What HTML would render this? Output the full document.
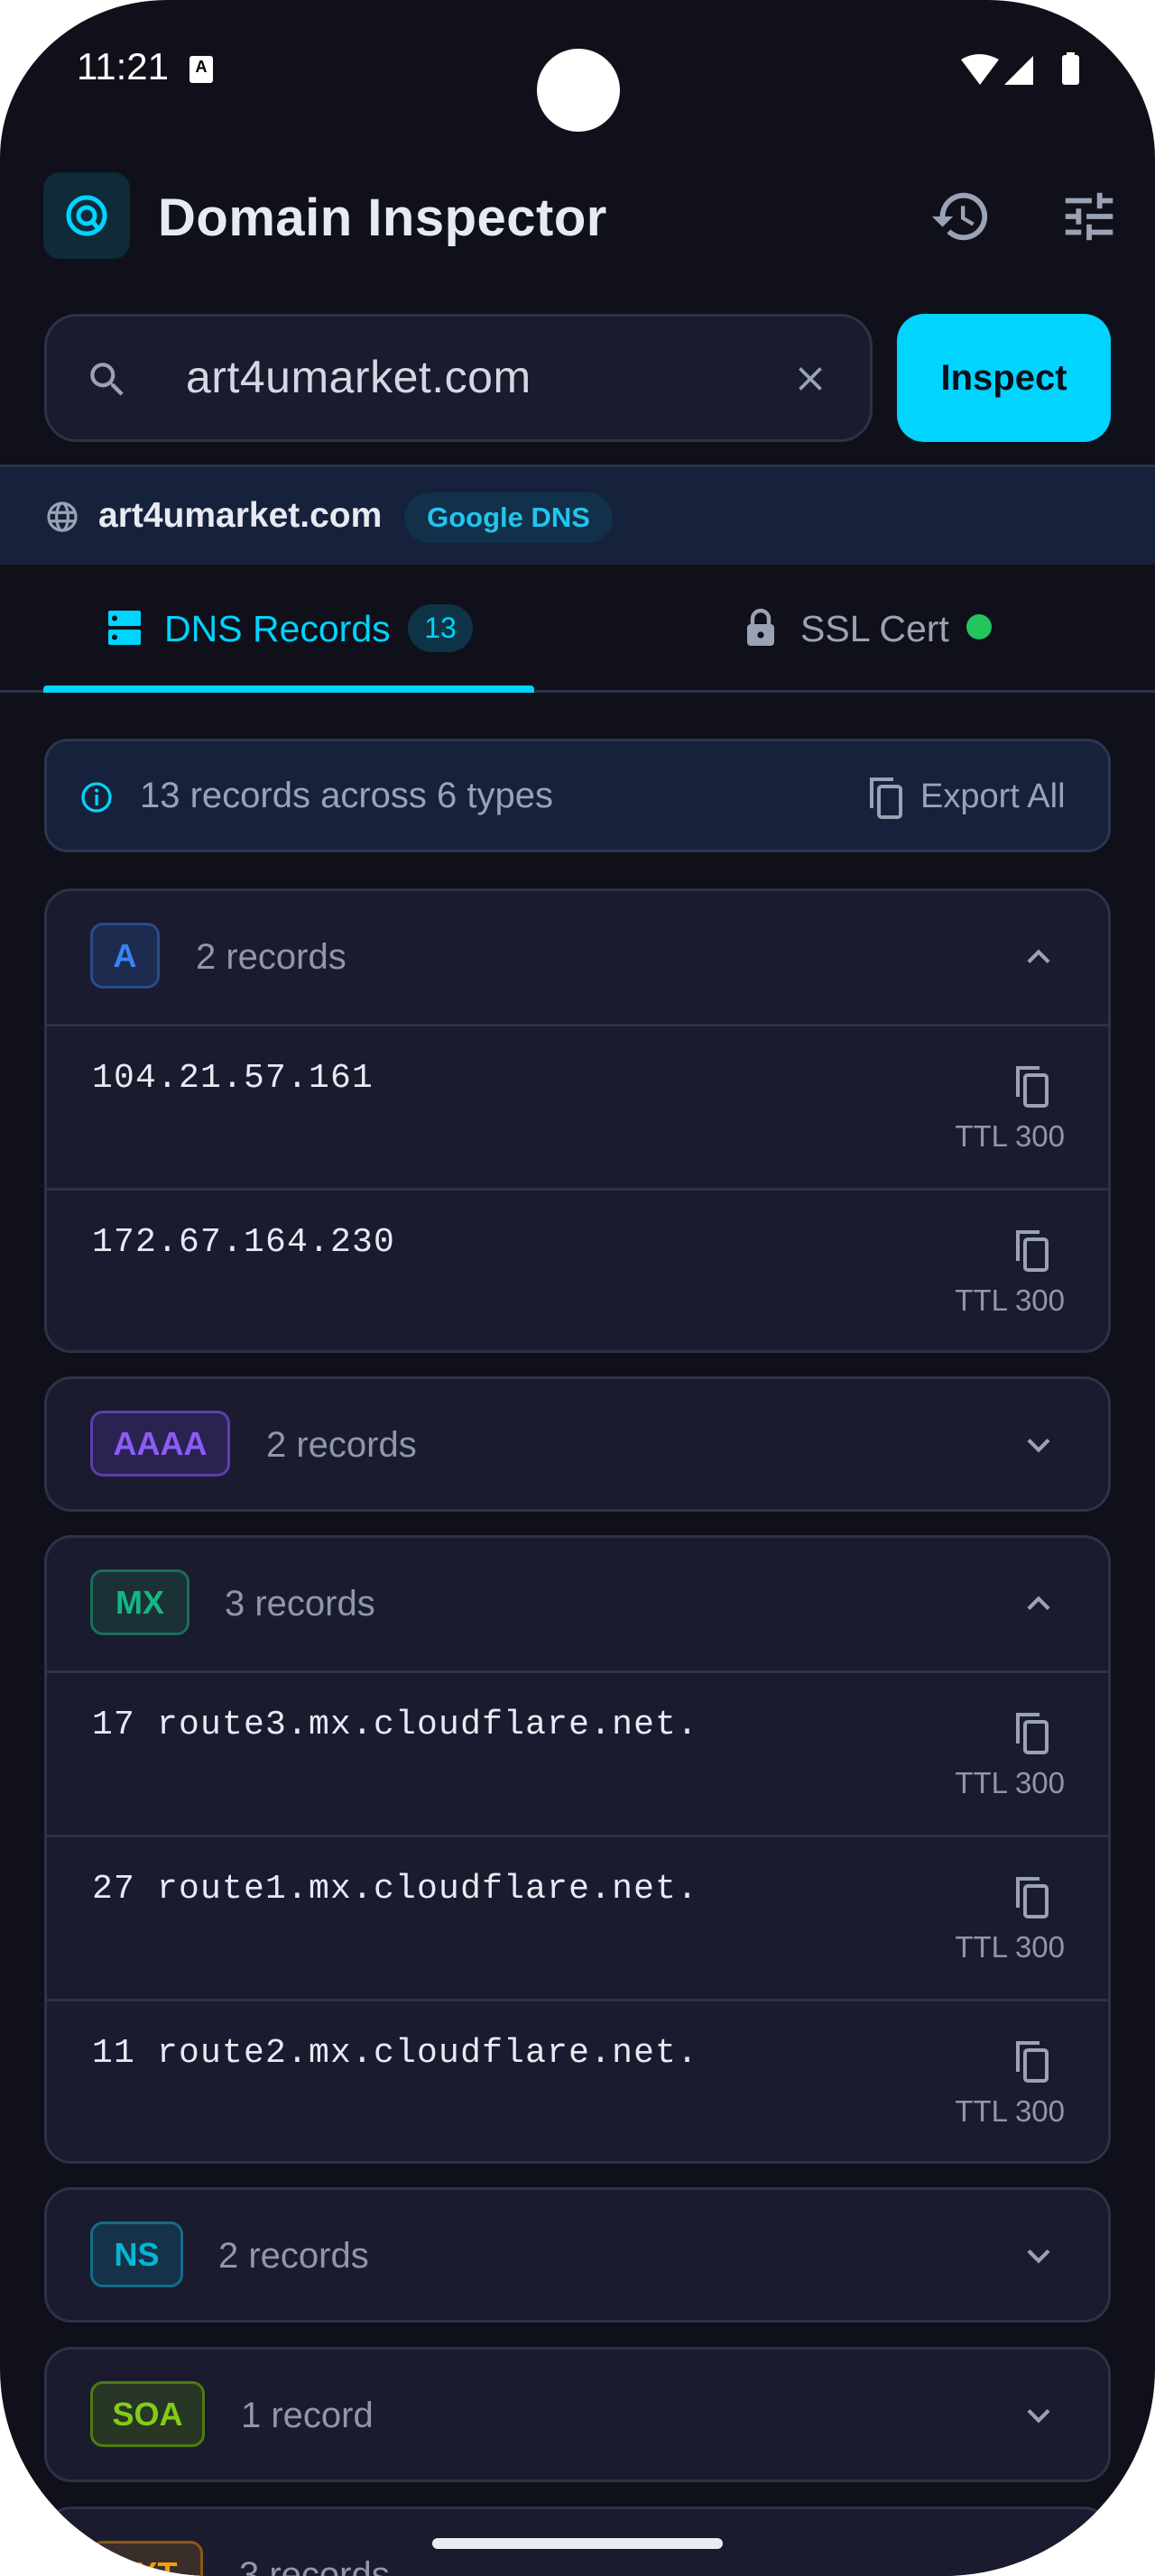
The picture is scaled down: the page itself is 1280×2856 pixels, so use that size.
<!DOCTYPE html>
<html><head><meta charset="utf-8"><style>
*{margin:0;padding:0;box-sizing:border-box}
body{width:1280px;height:2856px;background:#fff;overflow:hidden;font-family:"Liberation Sans",sans-serif;position:relative}
.phone{position:absolute;left:0;top:0;width:1280px;height:2856px;background:#0f101a;border-radius:185px 185px 235px 235px/175px 175px 230px 230px;overflow:hidden}
.a{position:absolute}
.card{position:absolute;left:49px;width:1182px;background:#1a1b2e;border:3px solid #2c3346;border-radius:30px;overflow:hidden}
.hdr{position:relative;height:147px}
.badge{position:absolute;left:48px;top:35px;height:73px;border:3px solid;border-radius:14px;font-weight:bold;font-size:36px;line-height:67px;text-align:center}
.cnt{position:absolute;top:0;line-height:147px;font-size:40px;color:#8f97ab}
.chev{position:absolute;right:58px;top:54px}
.row{position:relative;height:182px;border-top:3px solid #2c3346}
.mono{position:absolute;left:50px;top:36px;font-family:"Liberation Mono",monospace;font-size:38px;letter-spacing:1.2px;color:#e8eaf2}
.cp{position:absolute;right:62px;top:42px}
.ttl{position:absolute;right:48px;top:103px;font-size:33px;color:#8f97ab}
</style></head><body>
<div class="phone">
<div class="a" style="left:85px;top:50px;font-size:42px;color:#fff">11:21</div>
<div class="a" style="left:210px;top:62px;width:26px;height:30px;background:#fff;border-radius:3px;color:#000;font-size:18px;font-weight:bold;text-align:center;line-height:24px">A</div>
<div class="a" style="left:595px;top:54px;width:92px;height:92px;border-radius:50%;background:#fff"></div>
<svg class="a" style="left:1065px;top:58px" width="140" height="40" viewBox="0 0 140 40"><path d="M0 8 Q20 -4 42 8 L21 36Z" fill="#fff"/><path d="M48 36 L80 4 L80 36Z" fill="#fff"/><rect x="112" y="3" width="19" height="33" rx="3" fill="#fff"/><rect x="117" y="0" width="9" height="5" fill="#fff"/></svg>
<div class="a" style="left:48px;top:191px;width:96px;height:96px;border-radius:18px;background:#0f2a38"></div>
<svg class="a" style="left:66px;top:209px" width="60" height="60" viewBox="0 0 60 60"><circle cx="30" cy="30" r="20" fill="none" stroke="#00d4ff" stroke-width="5"/><circle cx="30" cy="30" r="9" fill="none" stroke="#00d4ff" stroke-width="5"/><path d="M36 36 L44 46" stroke="#00d4ff" stroke-width="5"/></svg>
<div class="a" style="left:175px;top:208px;font-size:58px;font-weight:bold;color:#e8eaf2;letter-spacing:0.5px">Domain Inspector</div>
<svg class="a" style="left:1030px;top:205px" width="70" height="70" viewBox="0 0 24 24"><path fill="#9aa3b5" d="M13 3a9 9 0 0 0-9 9H1l3.890 3.89.07.14L9 12H6c0-3.870 3.130-7 7-7s7 3.130 7 7-3.130 7-7 7c-1.930 0-3.680-.79-4.940-2.060l-1.420 1.420A8.954 8.954 0 0 0 13 21a9 9 0 0 0 0-18zm-1 5v5l4.280 2.540.72-1.210-3.5-2.080V8H12z"/></svg>
<svg class="a" style="left:1172px;top:205px" width="70" height="70" viewBox="0 0 24 24"><path fill="#9aa3b5" d="M3 17v2h6v-2H3zM3 5v2h10V5H3zm10 16v-2h8v-2h-8v-2h-2v6h2zM7 9v2H3v2h4v2h2V9H7zm14 4v-2H11v2h10zm-6-4h2V7h4V5h-4V3h-2v6z"/></svg>
<div class="a" style="left:49px;top:348px;width:918px;height:142px;background:#1a1b2e;border:3px solid #2c3346;border-radius:36px"></div>
<svg class="a" style="left:94px;top:396px" width="50" height="50" viewBox="0 0 24 24"><path fill="#9aa3b5" d="M15.5 14h-.79l-.28-.27A6.471 6.471 0 0 0 16 9.5 6.5 6.5 0 1 0 9.5 16c1.610 0 3.090-.59 4.230-1.570l.27.28v.79l5 4.990L20.490 19l-4.990-5zm-6 0C7.010 14 5 11.990 5 9.5S7.010 5 9.5 5 14 7.010 14 9.5 11.990 14 9.5 14z"/></svg>
<div class="a" style="left:206px;top:389px;font-size:50px;color:#d5d8e2;letter-spacing:0.5px">art4umarket.com</div>
<svg class="a" style="left:876px;top:398px" width="44" height="44" viewBox="0 0 24 24"><path fill="#9aa3b5" d="M19 6.41 17.59 5 12 10.59 6.41 5 5 6.41 10.59 12 5 17.59 6.41 19 12 13.41 17.59 19 19 17.59 13.41 12z"/></svg>
<div class="a" style="left:994px;top:348px;width:237px;height:142px;background:#00d4ff;border-radius:30px;font-size:40px;font-weight:bold;color:#0a0f1a;text-align:center;line-height:142px">Inspect</div>
<div class="a" style="left:0;top:515px;width:1280px;height:111px;background:#16213b;border-top:3px solid #2a3348"></div>
<svg class="a" style="left:50px;top:554px" width="38" height="38" viewBox="0 0 24 24"><circle cx="12" cy="12" r="9.5" fill="none" stroke="#9aa3b5" stroke-width="2"/><ellipse cx="12" cy="12" rx="4" ry="9.5" fill="none" stroke="#9aa3b5" stroke-width="2"/><path d="M2.5 9h19M2.5 15h19" stroke="#9aa3b5" stroke-width="2"/></svg>
<div class="a" style="left:109px;top:550px;font-size:39px;font-weight:bold;color:#e8eaf2">art4umarket.com</div>
<div class="a" style="left:448px;top:546px;width:231px;height:56px;background:#123049;border-radius:28px;font-size:31px;font-weight:bold;color:#22c5ee;text-align:center;line-height:56px">Google DNS</div>
<svg class="a" style="left:120px;top:677px" width="36" height="38" viewBox="0 0 36 38"><rect x="0" y="0" width="36" height="17" rx="2" fill="#00d4ff"/><rect x="0" y="21" width="36" height="17" rx="2" fill="#00d4ff"/><circle cx="7" cy="8.5" r="3" fill="#0f101a"/><circle cx="7" cy="29.5" r="3" fill="#0f101a"/></svg>
<div class="a" style="left:182px;top:674px;font-size:41px;color:#00d4ff">DNS Records</div>
<div class="a" style="left:452px;top:670px;width:72px;height:53px;border-radius:27px;background:#0e3346;color:#00d4ff;font-size:32px;text-align:center;line-height:53px">13</div>
<svg class="a" style="left:826px;top:674px" width="34" height="44" viewBox="0 0 17 22"><path d="M4 9V6a4.5 4.5 0 0 1 9 0v3" fill="none" stroke="#9aa3b5" stroke-width="2.2"/><rect x="1" y="9" width="15" height="12" rx="2" fill="#9aa3b5"/><circle cx="8.5" cy="15" r="1.8" fill="#0f101a"/></svg>
<div class="a" style="left:887px;top:674px;font-size:41px;color:#9aa3b5">SSL Cert</div>
<div class="a" style="left:1071px;top:681px;width:28px;height:28px;border-radius:50%;background:#22c55e"></div>
<div class="a" style="left:0;top:765px;width:1280px;height:3px;background:#2a3348"></div>
<div class="a" style="left:48px;top:760px;width:544px;height:8px;background:#00d4ff;border-radius:4px 4px 0 0"></div>
<div class="a" style="left:49px;top:819px;width:1182px;height:126px;background:#16213b;border:3px solid #2c3652;border-radius:26px"></div>
<svg class="a" style="left:89px;top:866px" width="36" height="36" viewBox="0 0 24 24"><circle cx="12" cy="12" r="10" fill="none" stroke="#00d4ff" stroke-width="2.2"/><rect x="11" y="10" width="2.2" height="8" fill="#00d4ff"/><circle cx="12.1" cy="7" r="1.4" fill="#00d4ff"/></svg>
<div class="a" style="left:155px;top:860px;font-size:40px;color:#9aa3b5">13 records across 6 types</div>
<svg class="a" style="left:960px;top:860px" width="44" height="48" viewBox="0 0 22 24"><path d="M3 18V2h12" fill="none" stroke="#9aa3b5" stroke-width="2"/><rect x="7" y="6" width="12" height="17" rx="1.5" fill="none" stroke="#9aa3b5" stroke-width="2"/></svg>
<div class="a" style="left:1020px;top:862px;font-size:38px;color:#9aa3b5">Export All</div>

<div class="card" style="top:985px;height:515px">
 <div class="hdr"><div class="badge" style="width:77px;background:#1d2b4e;border-color:#2a4b8c;color:#3b82f6">A</div><div class="cnt" style="left:165px">2 records</div>
 <svg class="chev" width="38" height="38" viewBox="0 0 24 24"><path d="M5 15.5l7-7 7 7" fill="none" stroke="#9aa3b5" stroke-width="2.6"/></svg></div>
 <div class="row"><div class="mono">104.21.57.161</div><svg class="cp" width="44" height="48" viewBox="0 0 22 24"><path d="M3 18V2h12" fill="none" stroke="#9aa3b5" stroke-width="2"/><rect x="7" y="6" width="12" height="17" rx="1.5" fill="none" stroke="#9aa3b5" stroke-width="2"/></svg><div class="ttl">TTL 300</div></div>
 <div class="row"><div class="mono">172.67.164.230</div><svg class="cp" width="44" height="48" viewBox="0 0 22 24"><path d="M3 18V2h12" fill="none" stroke="#9aa3b5" stroke-width="2"/><rect x="7" y="6" width="12" height="17" rx="1.5" fill="none" stroke="#9aa3b5" stroke-width="2"/></svg><div class="ttl">TTL 300</div></div>
</div>
<div class="card" style="top:1526px;height:150px">
 <div class="hdr"><div class="badge" style="width:155px;background:#2a2352;border-color:#5b3fb0;color:#8b5cf6">AAAA</div><div class="cnt" style="left:243px">2 records</div>
 <svg class="chev" width="38" height="38" viewBox="0 0 24 24"><path d="M5 8.5l7 7 7-7" fill="none" stroke="#9aa3b5" stroke-width="2.6"/></svg></div>
</div>
<div class="card" style="top:1702px;height:697px">
 <div class="hdr"><div class="badge" style="width:110px;background:#1b3136;border-color:#17705a;color:#10b981">MX</div><div class="cnt" style="left:197px">3 records</div>
 <svg class="chev" width="38" height="38" viewBox="0 0 24 24"><path d="M5 15.5l7-7 7 7" fill="none" stroke="#9aa3b5" stroke-width="2.6"/></svg></div>
 <div class="row"><div class="mono">17 route3.mx.cloudflare.net.</div><svg class="cp" width="44" height="48" viewBox="0 0 22 24"><path d="M3 18V2h12" fill="none" stroke="#9aa3b5" stroke-width="2"/><rect x="7" y="6" width="12" height="17" rx="1.5" fill="none" stroke="#9aa3b5" stroke-width="2"/></svg><div class="ttl">TTL 300</div></div>
 <div class="row"><div class="mono">27 route1.mx.cloudflare.net.</div><svg class="cp" width="44" height="48" viewBox="0 0 22 24"><path d="M3 18V2h12" fill="none" stroke="#9aa3b5" stroke-width="2"/><rect x="7" y="6" width="12" height="17" rx="1.5" fill="none" stroke="#9aa3b5" stroke-width="2"/></svg><div class="ttl">TTL 300</div></div>
 <div class="row"><div class="mono">11 route2.mx.cloudflare.net.</div><svg class="cp" width="44" height="48" viewBox="0 0 22 24"><path d="M3 18V2h12" fill="none" stroke="#9aa3b5" stroke-width="2"/><rect x="7" y="6" width="12" height="17" rx="1.5" fill="none" stroke="#9aa3b5" stroke-width="2"/></svg><div class="ttl">TTL 300</div></div>
</div>
<div class="card" style="top:2425px;height:150px">
 <div class="hdr"><div class="badge" style="width:103px;background:#163249;border-color:#136c88;color:#06b6d4">NS</div><div class="cnt" style="left:190px">2 records</div>
 <svg class="chev" width="38" height="38" viewBox="0 0 24 24"><path d="M5 8.5l7 7 7-7" fill="none" stroke="#9aa3b5" stroke-width="2.6"/></svg></div>
</div>
<div class="card" style="top:2602px;height:150px">
 <div class="hdr"><div class="badge" style="width:127px;background:#283626;border-color:#4d7c0f;color:#84cc16">SOA</div><div class="cnt" style="left:215px">1 record</div>
 <svg class="chev" width="38" height="38" viewBox="0 0 24 24"><path d="M5 8.5l7 7 7-7" fill="none" stroke="#9aa3b5" stroke-width="2.6"/></svg></div>
</div>
<div class="card" style="top:2779px;height:150px">
 <div class="hdr"><div class="badge" style="width:125px;background:#3a2e2a;border-color:#8a5a12;color:#f59e0b">TXT</div><div class="cnt" style="left:213px">3 records</div></div>
</div>
<div class="a" style="left:479px;top:2814px;width:322px;height:12px;border-radius:6px;background:#ececf0"></div>
</div>
</body></html>
